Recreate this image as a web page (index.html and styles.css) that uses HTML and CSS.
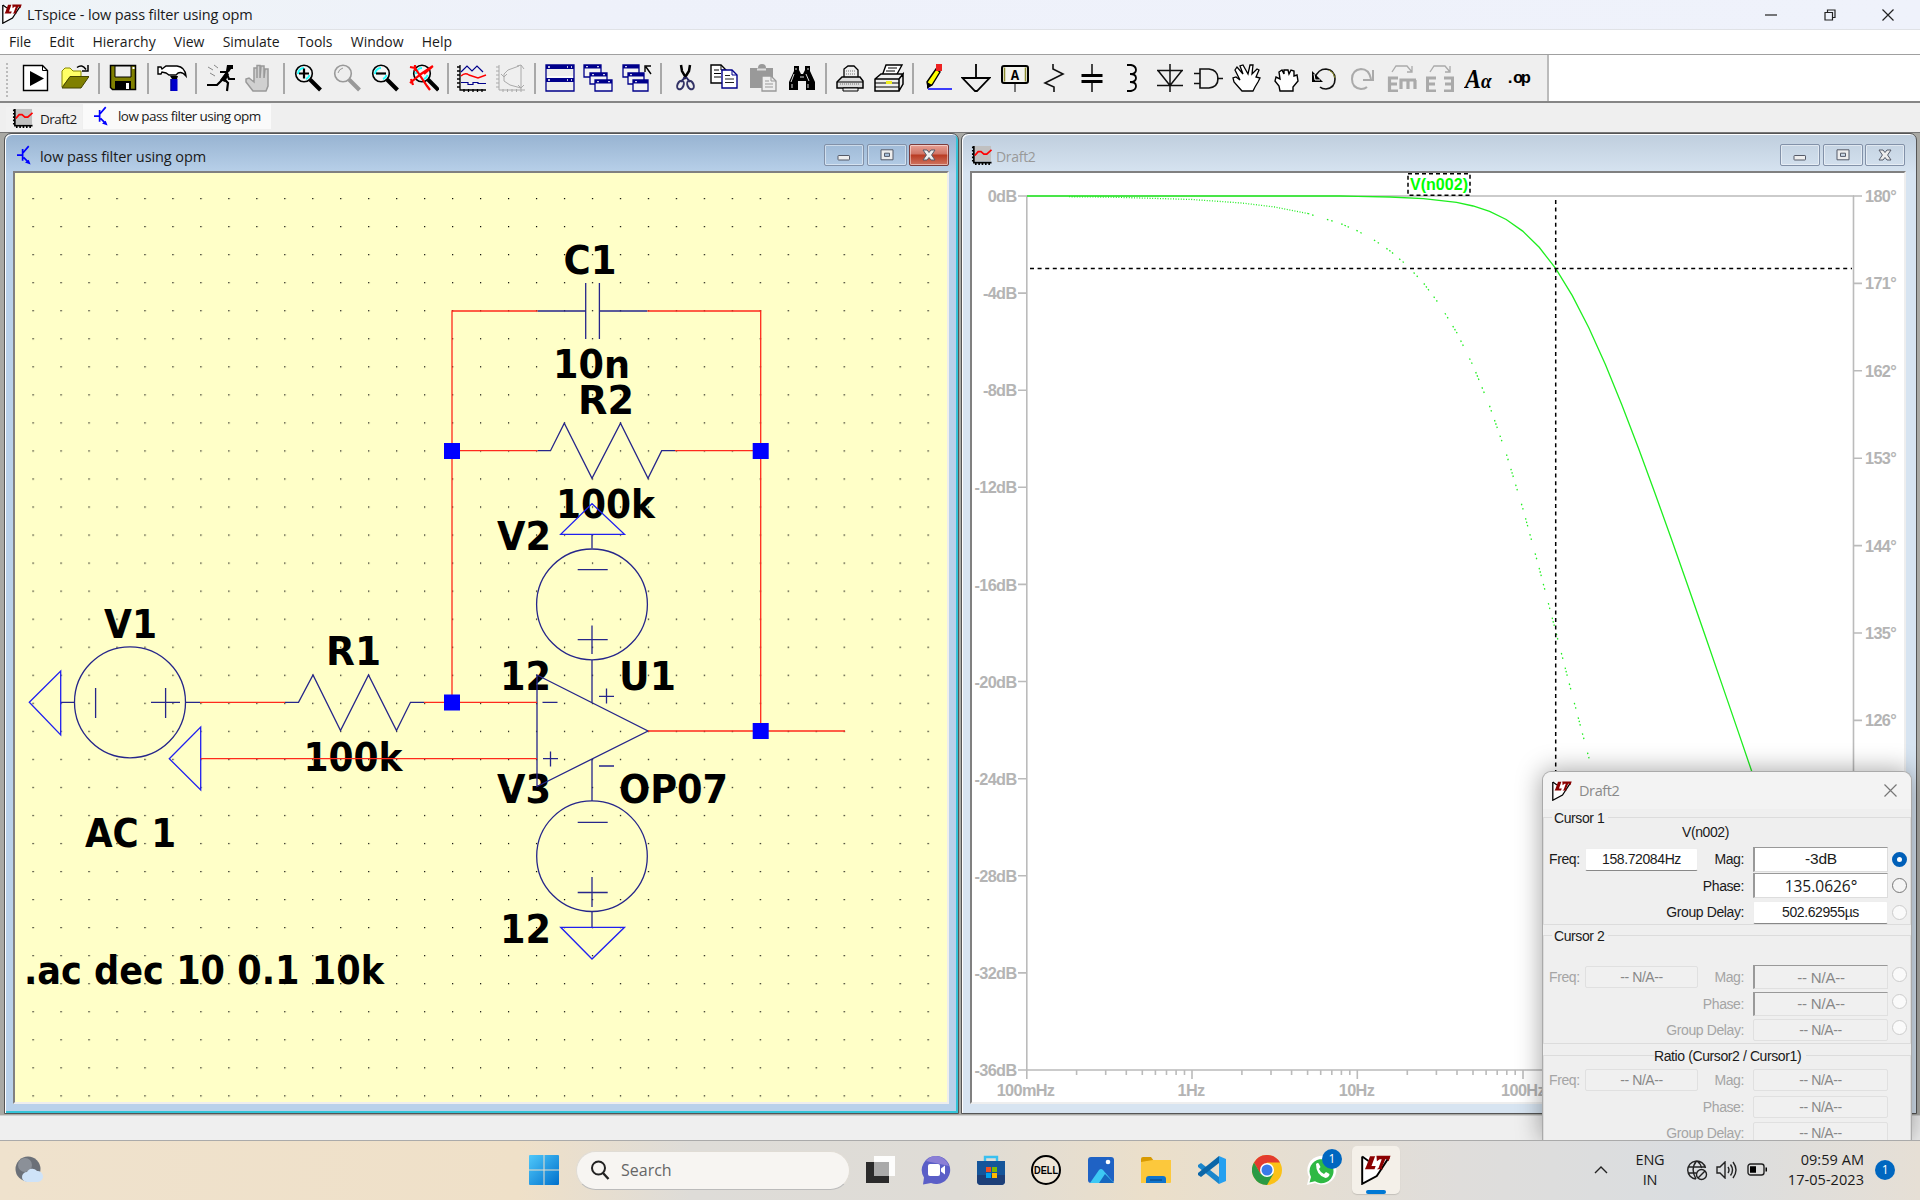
FILE: index.html
```html
<!DOCTYPE html>
<html lang="en">
<head>
<meta charset="utf-8">
<title>LTspice - low pass filter using opm</title>
<link rel="stylesheet" href="styles.css">
</head>
<body>
<svg class="defs" width="0" height="0" aria-hidden="true">
  <symbol id="lt-logo" viewBox="0 0 20 20">
    <path d="M.8 1v18.2L10.500 14l2-3L18.600 1.600" fill="#fff" stroke="#000" stroke-width="1.3"/>
    <path d="M.8 1 5 4" stroke="#000" stroke-width="1.2"/>
    <path d="M6 .800h3.400L7 7.400h2.800L9 9.500H2.600L3.600 7.400zM10.300.500h9.400l-1.300 3.700-1.200-1.400h-1L13.800 8.600l1 .900h-4.300l1.200-.900 2.100-5.800h-1.300l-1.900 1.400z" fill="#8b0000"/>
  </symbol>
  <symbol id="wave" viewBox="0 0 22 22">
    <path d="M3 1h18v16H3z" fill="#c0c0c0"/>
    <path d="M3 1v17.500h18.500M1 2.500h2M1 6h2M1 9.500h2M1 13h2M1 16.500h2M5 18v3M8.500 18v3M12 18v3M15.500 18v3M19 18v3" fill="none" stroke="#000" stroke-width="1.7"/>
    <path d="M4 11 7.500 7h3l3 2.500h3l5-4.500" fill="none" stroke="#f00" stroke-width="1.8"/>
  </symbol>
  <symbol id="transistor" viewBox="0 0 16 22">
    <path d="M0 10.500h6M6 4v12.500M6.500 8l6-7M7 13l5 5" fill="none" stroke="#00f" stroke-width="1.800"/>
    <path d="m14.500 20.500-6-2 4-3z" fill="#00f"/>
  </symbol>
  <symbol id="lens" viewBox="0 0 28 28">
    <circle cx="10" cy="9.500" r="8.300" fill="#f4f4f4" stroke="#000" stroke-width="1.600"/>
    <path d="M4 10a6 6 0 0 1 6-6M15.500 11a6 6 0 0 1-3.500 4" fill="none" stroke="#2ff" stroke-width="2"/>
    <path d="m16 15.500 10.500 10.500" stroke="#000" stroke-width="4"/>
  </symbol>
  <symbol id="g-min" viewBox="0 0 14 12"><rect x="1" y="6.500" width="11.500" height="4.500" rx=".6" fill="#eee" stroke="#555a68"/></symbol>
  <symbol id="g-max" viewBox="0 0 14 12"><path d="M1 .800h12v10H1zM4.500 4.200h5v3.200h-5z" fill="#eee" fill-rule="evenodd" stroke="#555a68"/></symbol>
  <symbol id="g-close" viewBox="0 0 14 12"><path d="M1 1h4l2 2.500L9 1h4L9.600 6 13 11H9L7 8.500 5 11H1L4.400 6z" fill="#eee" stroke="#555a68"/></symbol>
</svg>

<header class="titlebar">
  <svg class="logo" width="20" height="20"><use href="#lt-logo"/></svg>
  <span class="title">LTspice - low pass filter using opm</span>
  <div class="caption">
    <svg width="12" height="12" viewBox="0 0 12 12"><path d="M0 6h12"/></svg>
    <svg width="12" height="12" viewBox="0 0 12 12"><path d="M1 3.500h7.500v7.500H1zM3.500 3V1H11v7.500H9"/></svg>
    <svg width="12" height="12" viewBox="0 0 12 12"><path d="m.500.500 11 11M11.500.500l-11 11"/></svg>
  </div>
</header>

<nav class="menu"><span>File</span><span>Edit</span><span>Hierarchy</span><span>View</span><span>Simulate</span><span>Tools</span><span>Window</span><span>Help</span></nav>

<div class="toolrow">
<div class="toolbar">
  <svg viewBox="0 0 28 28"><path d="M1.500 1.500h19l5 5v20h-24z" fill="#fff" stroke="#000" stroke-width="1.400"/><path d="M20.500 1.500v5h5" fill="none" stroke="#000"/><path d="M8 7l14 7.500L8 22z"/></svg>
  <svg viewBox="0 0 28 28"><path d="M1 23V7l3-3h5l3 3h8v6H9z" fill="#ff6" stroke="#880"/><path d="M1 24 9 12.500h19L20 24z" fill="#808000" stroke="#440"/><path d="M16 3.500q5-4 9 2M27 1v6h-6" fill="none" stroke="#000" stroke-width="1.500"/></svg>
  <i></i>
  <svg viewBox="0 0 28 28"><path d="M1.500 1.500h25v24h-23l-2-2z" fill="#808000" stroke="#000" stroke-width="1.500"/><path d="M6 2h16v11H6z" fill="#eee" stroke="#000"/><path d="M6 17h16v8.500H6z"/><path d="M17 19h3v6h-3zM23.500 3h2v2h-2z" fill="#fff"/></svg>
  <i></i>
  <svg class="wide" viewBox="0 0 30 28"><path d="M1 3h3l1 2 4-3h11q8 1 9 10-4-5-8-3l-2 2h-7L9 9 5 8l-1 2H1z" fill="#fff" stroke="#000" stroke-width="1.400"/><path d="M13 12h8l-1 3h-5z"/><path d="M13.500 15h7v12h-7z" fill="#00c"/><path d="M14 15v12" stroke="#008"/></svg>
  <i></i>
  <svg viewBox="0 0 28 28"><path d="M20 1h6v4h-2l-2 3-3-1z"/><path d="m21 7-6 9M13 8h6l3 7h6M16 14l5 5-1 8M15 16l-5 5H0" fill="none" stroke="#000" stroke-width="2.200"/><path d="m19 8-6 8 5 2 4-8z"/><path d="m1 3 5 3M7 1l4 3M3 9l5 3" stroke="#888"/></svg>
  <svg viewBox="0 0 28 28"><path d="M8 27 1 18v-3l3-1 5 4V4h3v10V1.500h3V14l1-12h3v12l1-9h3v17l-2 5z" fill="#d0d0d0" stroke="#999" stroke-width="1.500"/></svg>
  <i></i>
  <svg viewBox="0 0 28 28"><use href="#lens"/><path d="M5 9.500h10M10 4.500v10" stroke="#000" stroke-width="2.200"/></svg>
  <svg viewBox="0 0 28 28"><circle cx="10" cy="9.500" r="8.300" fill="#eee" stroke="#999" stroke-width="1.600"/><path d="M5 9q1-4 5-5" fill="none" stroke="#999"/><path d="m16 15.500 10.500 10.500" stroke="#999" stroke-width="4"/></svg>
  <svg viewBox="0 0 28 28"><use href="#lens"/><path d="M5 9.500h10" stroke="#000" stroke-width="2.200"/></svg>
  <svg class="wide" viewBox="0 0 30 28"><use href="#lens" x="3" width="28" height="28"/><path d="m1 3 5 1 12 18 3 4M24 2 12 10 1 19M6 1v6M2 15l2 6M15 10l8-7" fill="none" stroke="#f00" stroke-width="2.200"/></svg>
  <i></i>
  <svg class="wide" viewBox="0 0 30 28"><path d="M3 1v25h26M0 3h3M0 7h3M0 11h3M0 15h3M0 19h3M0 23h3M7 25v3M11.500 25v3M16 25v3M20.500 25v3M25 25v3" fill="none" stroke="#000" stroke-width="1.300"/><path d="m4 8 6-6 5 5 5-5 6 6M4 18.500h7v2h5v-2h5v1h8" fill="none" stroke="#00008b" stroke-width="1.200"/><path d="M4 12q4-4 8-1 6 2 9 3l8-3" fill="none" stroke="#f00" stroke-width="1.400"/></svg>
  <svg class="wide" viewBox="0 0 30 28"><path d="M3 1v25h26M0 3h3M0 7h3M0 11h3M0 15h3M0 19h3M0 23h3M7 25v3M11.500 25v3M16 25v3M20.500 25v3M25 25v3M23 2 12 6l-4 4v7l6 4 11 3M25 1v24M8 13l-3-3M8 13l3-3M25 1l-4 1M25 1l3 4M25 24l-3-3M25 24l3-3" fill="none" stroke="#aaa"/></svg>
  <i></i>
  <svg class="wide" viewBox="0 0 30 28"><path d="M1 1h28v26H1z" fill="#eee" stroke="#00008b" stroke-width="1.300"/><path d="M1 1h28v4H1zM1 14h28v4H1z" fill="#00008b"/><path d="M3 3h2M22 3h1M26 3h1M3 16h2M22 16h1M26 16h1M2 13h26" stroke="#fff" stroke-width="1.500"/></svg>
  <svg class="wide" viewBox="0 0 30 28"><g fill="#f4f4f4" stroke="#00008b" stroke-width="1.300"><path d="M1 1h17v12H1z"/><path d="M7 9h17v11H7z"/><path d="M12 16h17v11H12z"/></g><path d="M1 1h17v3.500H1zM7 9h17v3.500H7zM12 16h17v3.500H12z" fill="#00008b"/><path d="M3 2.700h2M14 2.700h2M9 10.700h2M20 10.700h2M14 17.700h2M25 17.700h2" stroke="#fff"/></svg>
  <svg class="wide" viewBox="0 0 30 28"><g fill="#f4f4f4" stroke="#00008b" stroke-width="1.300"><path d="M1 1h16v12H1z"/><path d="M6 9h16v11H6z"/><path d="M11 16h15v11H11z"/></g><path d="M1 1h16v3.500H1zM6 9h16v3.500H6zM11 16h15v3.500H11z" fill="#00008b"/><path d="M3 2.700h2M8 10.700h2M13 17.700h2" stroke="#fff"/><path d="M29 10 24 3M29 2h-6v6" fill="none" stroke="#000" stroke-width="1.400"/></svg>
  <i></i>
  <svg viewBox="0 0 28 28"><path d="m9 1 1 6 4 7M18 1l-1 6-5 8" fill="none" stroke="#000" stroke-width="2.500"/><path d="m13 13-4 5M14 13l4 5" stroke="#226" stroke-width="2"/><ellipse cx="8.500" cy="21" rx="3" ry="4.500" transform="rotate(25 8.500 21)" fill="none" stroke="#336" stroke-width="2"/><ellipse cx="18.500" cy="21" rx="3" ry="4.500" transform="rotate(-25 18.500 21)" fill="none" stroke="#336" stroke-width="2"/></svg>
  <svg viewBox="0 0 28 28"><path d="M1 1h10l5 5v13H1z" fill="#fff" stroke="#000" stroke-width="1.400"/><path d="M11 1v5h5M4 6h5M4 9.500h7M4 13h7" fill="none" stroke="#000"/><path d="M12 6h10l5 5v13H12z" fill="#fff" stroke="#00008b" stroke-width="1.400"/><path d="M22 6v5h5" fill="none" stroke="#00008b"/><path d="M15 11.500h5M15 15h9M15 18.500h9" stroke="#222"/></svg>
  <svg viewBox="0 0 28 28"><path d="M1 4h8q0-4 4-4t4 4h7v20H1z" fill="#999"/><path d="M8 5.500h9" stroke="#ddd" stroke-width="2"/><path d="M13 12h9l5 5v10H13z" fill="#eee" stroke="#999" stroke-width="1.300"/><path d="M22 12v5h5M16 17h4M16 20h8M16 23h8" fill="none" stroke="#999"/></svg>
  <svg viewBox="0 0 28 28"><path d="M6 2h5v4l2 4h2l2-4V2h5v5l5 11v8h-9v-9h-8v9H1v-8L6 7z"/><path d="M8 4v2M20 4v2M6 10l-3 8M18 10l3 7M4 20v4M20 20v4M12 13h4" fill="none" stroke="#ddd"/></svg>
  <i></i>
  <svg viewBox="0 0 28 28"><path d="M8 14V5l4-3h6l4 4v8" fill="#eee" stroke="#000" stroke-width="1.300"/><path d="m1 18 5-5h18l3 4v7H1z" fill="#ddd" stroke="#000" stroke-width="1.500"/><path d="M1 18h26M7 24h15v3H7z" fill="#eee" stroke="#000"/><path d="M10 7h10M10 10h10M4 20h20" stroke="#777" stroke-dasharray="1 1"/></svg>
  <svg class="wide" viewBox="0 0 30 28"><path d="m8 12 4-11h16l-6 11" fill="#fff" stroke="#000" stroke-width="1.400"/><path d="m1 15 6-5h22l-4 5v12H1zM25 15l4-5v10l-4 7M1 15h24" fill="#eee" stroke="#000" stroke-width="1.500"/><path d="M14 4h9M12 7h9M1 19h24M1 23h24" stroke="#000"/><path d="M12 17h6v3h-6z" fill="#ee2"/></svg>
  <i></i>
  <svg viewBox="0 0 28 28"><path d="M12 5 3 18l1 5 4-2 8-13z" fill="#ff0" stroke="#000" stroke-width="1.400"/><path d="M13 1h4v5h-4z" fill="#e22" stroke="#e22" stroke-width="2"/><path d="m3 18 5 3-5 4z"/><path d="M4 25h24" stroke="#00f" stroke-width="1.500"/></svg>
  <svg class="wide" viewBox="0 0 30 28"><path d="M15 0v14M1.500 14h27L16 27h-2z" fill="none" stroke="#000" stroke-width="1.800"/></svg>
  <svg viewBox="0 0 28 28"><rect x="1" y="2" width="26" height="17" rx="2" fill="#f4f4ee" stroke="#000" stroke-width="2"/><path d="M3.500 3.500v14M24.500 3.500v14" stroke="#8a8a30" stroke-width="1.500"/><path d="M14 19v9" stroke="#000"/><text x="14" y="16" text-anchor="middle" class="ic-a">A</text></svg>
  <svg viewBox="0 0 28 28"><path d="M13 0v5l10 5-18 9 9 4v5" fill="none" stroke="#111" stroke-width="1.600"/></svg>
  <svg viewBox="0 0 28 28"><path d="M14 0v10M14 17v11" stroke="#000" stroke-width="1.400"/><path d="M3.500 11.500h21M3.500 17.500h21" stroke="#000" stroke-width="3"/></svg>
  <svg viewBox="0 0 28 28"><path d="M10 1h4q5 1 5 5t-6 4q6 0 6 4t-6 4q6 0 6 4t-5 5h-4" fill="none" stroke="#000" stroke-width="1.800"/></svg>
  <svg viewBox="0 0 28 28"><path d="M14 0v28M1 6.500h26M1 21.500h26M2 6.500l12 15 12-15" fill="none" stroke="#111" stroke-width="1.500"/></svg>
  <svg class="wide" viewBox="0 0 30 28"><path d="M7 5h9q9 1 9 9.500T16 24H7zM1 9.500h6M1 19.500h6M24 14.500h6" fill="none" stroke="#111" stroke-width="1.600"/></svg>
  <svg class="wide" viewBox="0 0 30 28"><path d="m10 27-8-9-1-4 3-1 4 3L3 6l2-3 6 7L8 2l3-1 5 9 2-9h3l-1 9 5-5 2 1-3 7 4 1-2 4-3 5-2 4z" fill="#fff" stroke="#000" stroke-width="1.300"/></svg>
  <svg viewBox="0 0 28 28"><path d="m8 27-1-5-4-5 1-4 4 2-1-7 3-2 2 4V6h4l1 4 2-4 3 1v5l3-1 1 6-5 6v4z" fill="#fff" stroke="#000" stroke-width="1.400"/></svg>
  <svg viewBox="0 0 28 28"><path d="M5 14q3-9 11-9 9 1 9 10t-9 10q-4 0-6-2" fill="none" stroke="#111" stroke-width="1.600"/><path d="M19 6q5 2 6 8" fill="none" stroke="#882"/><path d="M2 7v11h11z"/><path d="m4 10 1 6h5" stroke="#fff" fill="none"/></svg>
  <svg viewBox="0 0 28 28"><path d="M22 15Q20 5 12 5q-9 1-9 10t9 10q4 0 6-2M24 6v10H14" fill="none" stroke="#aaa" stroke-width="2"/></svg>
  <svg class="wide" viewBox="0 0 30 28"><path d="M5 8 9 2h11l5 6M25 2v6h-5" fill="none" stroke="#aaa" stroke-width="1.300"/><path d="M11 14H2.500v13H11M2.500 20H10M29 16H14v9M21 16v9M28 16v9" fill="none" stroke="#aaa" stroke-width="3.200"/></svg>
  <svg class="wide" viewBox="0 0 30 28"><path d="M5 8 9 2h11l5 6M25 2v6h-5" fill="none" stroke="#aaa" stroke-width="1.300"/><path d="M11 14H2.500v13H11M2.500 20H10M19 14h8.500v13H19M27.500 20H20" fill="none" stroke="#aaa" stroke-width="3"/></svg>
  <svg class="wide" viewBox="0 0 30 28"><text x="1" y="24" class="ic-aa" textLength="16" lengthAdjust="spacingAndGlyphs">A</text><text x="17" y="24" class="ic-al" textLength="10.500" lengthAdjust="spacingAndGlyphs">α</text></svg>
  <svg class="wide" viewBox="0 0 30 28"><text x="2" y="19" class="ic-op" textLength="26">.op</text></svg>
</div>
</div>

<div class="tabs">
  <div class="tab"><svg width="21" height="21"><use href="#wave"/></svg><span>Draft2</span></div>
  <div class="tab active"><svg width="15" height="21"><use href="#transistor"/></svg><span>low pass filter using opm</span></div>
</div>

<main class="mdi">
  <section class="child focus">
    <div class="child-bar">
      <svg width="15" height="21"><use href="#transistor"/></svg><span>low pass filter using opm</span>
      <div class="btns"><b><svg width="14" height="12"><use href="#g-min"/></svg></b><b><svg width="14" height="12"><use href="#g-max"/></svg></b><b class="x"><svg width="14" height="12"><use href="#g-close"/></svg></b></div>
    </div>
    <div class="canvas sch">
      <svg class="drawing" viewBox="15 173 933 930" width="933" height="930">
        <pattern id="grid" x="32.500" y="198" width="27.970" height="28.040" patternUnits="userSpaceOnUse"><rect width="1.200" height="1.200" fill="#000"/></pattern>
        <rect x="15" y="173" width="933" height="930" fill="url(#grid)"/>
        <g class="lbl">
          <text x="104" y="638" textLength="53" lengthAdjust="spacingAndGlyphs">V1</text>
          <text x="326" y="665" textLength="55" lengthAdjust="spacingAndGlyphs">R1</text>
          <text x="303.500" y="770.500" textLength="99" lengthAdjust="spacingAndGlyphs">100k</text>
          <text x="85" y="846.500" textLength="91" lengthAdjust="spacingAndGlyphs">AC 1</text>
          <text x="24" y="984" textLength="360" lengthAdjust="spacingAndGlyphs">.ac dec 10 0.1 10k</text>
          <text x="563.500" y="273.700" textLength="53" lengthAdjust="spacingAndGlyphs">C1</text>
          <text x="553" y="377.500" textLength="77" lengthAdjust="spacingAndGlyphs">10n</text>
          <text x="578" y="414" textLength="56" lengthAdjust="spacingAndGlyphs">R2</text>
          <text x="556" y="517.500" textLength="99" lengthAdjust="spacingAndGlyphs">100k</text>
          <text x="497" y="550" textLength="54" lengthAdjust="spacingAndGlyphs">V2</text>
          <text x="500" y="690" textLength="51" lengthAdjust="spacingAndGlyphs">12</text>
          <text x="619" y="690" textLength="57" lengthAdjust="spacingAndGlyphs">U1</text>
          <text x="619" y="803" textLength="109" lengthAdjust="spacingAndGlyphs">OP07</text>
          <text x="497" y="803" textLength="54" lengthAdjust="spacingAndGlyphs">V3</text>
          <text x="500" y="943" textLength="51" lengthAdjust="spacingAndGlyphs">12</text>
        </g>
        <g class="part">
          <path d="M537.500 311h48M585.700 283v56M599.400 283v56M599.400 311h48"/>
          <path d="M537.500 450.700h13L564.300 423.300 592 478.300l28.500-55L648 478.300l13.700-27.600H675"/>
          <path d="M592 534.300v14M577.700 569.700h30M577.700 639.700h30M592 625.500V654M592 660v42.300"/>
          <circle cx="592" cy="604.400" r="55.400"/>
          <path d="M537 675 648 731 537 786.500zM542.500 702.300h15M543 758.700h15M550.500 751.500v15M599 696.300h15M606.500 688.500v15M599 766h15M592 758.700V801M577.700 822.300h30M577.700 892.500h30M592 877v30M592 911.500v15.800"/>
          <circle cx="592" cy="856.200" r="55.300"/>
          <circle cx="130" cy="702.300" r="55.500"/>
          <path d="M60.700 702.300H74M95.600 688v30M151 702.300h29M165.600 688v30M186 702.300h14M285 702.300h13.500L313 675l27.500 55.500L368.500 675l28 55.500 14-28.200H424"/>
        </g>
        <g class="gnd"><path d="M592 503.700 560.700 534.300h63.800zM560.700 927.300h63.800L592 959zM29.300 702.300 60.700 671v64zM169.300 758.700 200.700 727v63z"/></g>
        <g class="wire"><path d="M537.500 311H452v391.300M647.500 311h113.200v420M452 450.700h85.500M675 450.700h85.700M200 702.300h85M424 702.300h113M200.700 758.700H537M648 731h197"/></g>
        <path class="node" d="M444 443h16v16h-16zM752.700 443h16v16h-16zM444 694.500h16v16h-16zM752.700 723h16v16h-16z"/>
      </svg>
    </div>
  </section>

  <section class="child">
    <div class="child-bar">
      <svg width="21" height="21"><use href="#wave"/></svg><span>Draft2</span>
      <div class="btns"><b><svg width="14" height="12"><use href="#g-min"/></svg></b><b><svg width="14" height="12"><use href="#g-max"/></svg></b><b><svg width="14" height="12"><use href="#g-close"/></svg></b></div>
    </div>
    <div class="canvas">
      <svg class="drawing" viewBox="972 173 933 930" width="933" height="930">
        <g class="axis">
          <path d="M1026.800 196H1854M1026.800 196v883M1018 1070h836M1853.500 196v874"/>
          <path d="M1018 196h9M1018 293.100h9M1018 390.200h9M1018 487.300h9M1018 584.400h9M1018 681.500h9M1018 778.700h9M1018 875.800h9M1018 972.900h9"/>
          <path d="M1853 196h9M1853 283.400h9M1853 370.800h9M1853 458.200h9M1853 545.600h9M1853 633h9M1853 720.400h9"/>
          <path d="M1192 1070v9M1357.300 1070v9M1523 1070v9"/>
          <path id="decade" d="M1076.600 1070v5M1105.700 1070v5M1126.300 1070v5M1142.300 1070v5M1155.400 1070v5M1166.500 1070v5M1176.100 1070v5M1184.500 1070v5"/>
          <use href="#decade" x="165.300"/><use href="#decade" x="330.700"/>
        </g>
        <g class="tick end">
          <text x="1016.500" y="202">0dB</text><text x="1016.500" y="299">-4dB</text><text x="1016.500" y="396">-8dB</text><text x="1016.500" y="493">-12dB</text><text x="1016.500" y="590.500">-16dB</text><text x="1016.500" y="687.500">-20dB</text><text x="1016.500" y="784.500">-24dB</text><text x="1016.500" y="881.500">-28dB</text><text x="1016.500" y="978.500">-32dB</text><text x="1016.500" y="1075.500">-36dB</text>
        </g>
        <g class="tick">
          <text x="1865" y="201.500">180°</text><text x="1865" y="289">171°</text><text x="1865" y="376.500">162°</text><text x="1865" y="464">153°</text><text x="1865" y="551.500">144°</text><text x="1865" y="639">135°</text><text x="1865" y="725.500">126°</text>
        </g>
        <g class="tick mid">
          <text x="1025.500" y="1095.500">100mHz</text><text x="1191" y="1095.500">1Hz</text><text x="1356.500" y="1095.500">10Hz</text><text x="1523" y="1095.500">100Hz</text>
        </g>
        <path class="trace" d="M1027 196H1340L1357.400 196.400 1390 197 1423.500 198.600 1456.600 202.400 1473.100 206 1489.600 211.400 1506.200 219.500 1522.700 231.100 1539.200 247.300 1555.800 268.700 1572.300 295.600 1588.800 327.800 1605.400 364.600 1621.900 405 1638.400 448 1654.900 493 1671.500 539.200 1688 586.200 1704.500 633.800 1721.100 681.900 1737.600 729.900 1754.100 778.200"/>
        <path class="phase a" d="M1069 196.700 1109.400 197.100 1192.100 199.500 1241.700 203 1274.800 207 1307.800 213.500"/>
        <path class="phase b" d="M1307.800 213.500 1340.900 223.700 1357.400 230.900 1373.900 239.900 1390.500 251.200 1407 265.400 1423.500 283.100 1440 305.100 1456.600 332.300 1473.100 365.700 1489.600 406 1506.200 453.500 1522.700 508 1539.200 568.200 1555.800 631.700 1572.300 695.200 1590 762"/>
        <rect x="1408" y="173.700" width="62" height="21.500" class="pick"/>
        <path class="cursor" d="M1030 268.500h822M1555.700 200V1070"/>
        <text x="1410" y="190" class="sig" textLength="58" lengthAdjust="spacingAndGlyphs">V(n002)</text>
      </svg>
    </div>
  </section>
</main>

<div class="status"></div>

<aside class="dialog">
  <div class="dlg-title"><svg width="20" height="20"><use href="#lt-logo"/></svg><span>Draft2</span><svg class="dx" width="13" height="13" viewBox="0 0 13 13"><path d="m.500.500 12 12M12.500.500l-12 12"/></svg></div>
  <div class="group g1">
    <div class="legend">Cursor 1</div>
    <div class="sig-name">V(n002)</div>
    <div class="row"><label>Freq:</label><output>158.72084Hz</output><label>Mag:</label><output class="sunk">-3dB</output><em class="radio on"></em></div>
    <div class="row"><label class="span">Phase:</label><output class="sunk wide">135.0626°</output><em class="radio"></em></div>
    <div class="row"><label class="span">Group Delay:</label><output>502.62955µs</output><em class="radio off"></em></div>
  </div>
  <div class="group g2 dis">
    <div class="legend">Cursor 2</div>
    <div class="sig-name"></div>
    <div class="row"><label>Freq:</label><output>-- N/A--</output><label>Mag:</label><output class="sunk">-- N/A--</output><em class="radio off"></em></div>
    <div class="row"><label class="span">Phase:</label><output class="sunk">-- N/A--</output><em class="radio off"></em></div>
    <div class="row"><label class="span">Group Delay:</label><output>-- N/A--</output><em class="radio off"></em></div>
  </div>
  <div class="group g3 dis">
    <div class="legend">Ratio (Cursor2 / Cursor1)</div>
    <div class="row"><label>Freq:</label><output>-- N/A--</output><label>Mag:</label><output>-- N/A--</output></div>
    <div class="row"><label class="span">Phase:</label><output>-- N/A--</output></div>
    <div class="row"><label class="span">Group Delay:</label><output>-- N/A--</output></div>
  </div>
</aside>

<footer class="taskbar">
  <svg class="weather" width="28" height="28" viewBox="0 0 28 28"><circle cx="13" cy="13" r="12.500" fill="#6b7078"/><circle cx="10" cy="9" r="7" fill="#8b9098"/><path d="M12 26a5 5 0 0 1 0-10 6 6 0 0 1 10-1 5.500 5.500 0 0 1 1 11z" fill="#cfe3f8"/></svg>
  <div class="apps">
    <svg class="start" width="30" height="30" viewBox="0 0 30 30"><defs><linearGradient id="w" x2="1" y2="1"><stop stop-color="#4fc8fa"/><stop offset="1" stop-color="#0070cc"/></linearGradient></defs><path d="M0 1q0-1 1-1h13.500v14.500H0zM15.500 0H29q1 0 1 1v13.500H15.500zM0 15.500h14.500V30H1q-1 0-1-1zM15.500 15.500H30V29q0 1-1 1H15.500z" fill="url(#w)"/></svg>
    <div class="search"><svg width="20" height="20" viewBox="0 0 20 20"><circle cx="8.500" cy="8" r="6.500" fill="none" stroke="#222" stroke-width="2"/><path d="m13 13 5.500 6" stroke="#222" stroke-width="2.400"/></svg><span>Search</span></div>
    <svg class="app" viewBox="0 0 30 30"><path d="M0 7h23v21H0z" fill="#2b2b2b"/><path d="M8 1h21v20H8z" fill="#fff" opacity=".93"/><path d="M8 7h15v14H8z" fill="#aaa"/></svg>
    <svg class="app" viewBox="0 0 30 30"><path d="M15 1a14 14 0 1 1-5 27l-8 1.500 1-7A14 14 0 0 1 15 1z" fill="#5b5fc7"/><path d="M15 1a14 14 0 0 1 13 10L5 6q4-5 10-5z" fill="#8b7fd6"/><rect x="7" y="9" width="12" height="12" rx="2" fill="#fff"/><path d="m20 13.500 4-3v9l-4-3z" fill="#fff"/></svg>
    <svg class="app" viewBox="0 0 30 30"><path d="M9 7V2h12v5" fill="none" stroke="#39c0f0" stroke-width="2.400"/><path d="M1 6h28v20q0 4-4 4H5q-4 0-4-4z" fill="#15559a"/><path d="M1 20h28v6q0 4-4 4H5q-4 0-4-4z" fill="#1d3f78"/><path d="M10 12h5v5h-5z" fill="#f25022"/><path d="M16 12h5v5h-5z" fill="#7fba00"/><path d="M10 18h5v5h-5z" fill="#00a4ef"/><path d="M16 18h5v5h-5z" fill="#ffb900"/></svg>
    <svg class="app" viewBox="0 0 30 30"><circle cx="15" cy="15" r="14" fill="#eee6d8" stroke="#000" stroke-width="2"/><text x="15" y="18.500" text-anchor="middle" class="dell" textLength="24" lengthAdjust="spacingAndGlyphs">DELL</text></svg>
    <svg class="app" viewBox="0 0 30 30"><rect x="2" y="2" width="26" height="26" rx="3" fill="#1f62c4"/><path d="M4 28 13 15q2-2 4 0l11 13z" fill="#3cc8f4"/><path d="m13 28 6-9 9 9z" fill="#1668c0"/><circle cx="22" cy="7" r="2.300" fill="#fff"/></svg>
    <svg class="app" viewBox="0 0 30 30"><path d="M0 4q0-2 2-2h8l3 4h-5L0 8z" fill="#d99a00"/><path d="M0 7 12 5h18v22q0 1-1 1H0z" fill="#fcc83c"/><path d="M5 28v-4q0-3 3-3h14q3 0 3 3v4z" fill="#0f74cc"/><path d="M9 25h12" stroke="#0a4f93" stroke-width="1.500"/></svg>
    <svg class="app" viewBox="0 0 30 30"><path d="m1 10 3-2 18 14v7L1 12z" fill="#1a86cc"/><path d="M22 1v7L4 22l-3-2v-2z" fill="#0b66a8"/><path d="m22 1 7 3v22l-7 3z" fill="#26a0f0"/></svg>
    <svg class="app" viewBox="0 0 30 30"><circle cx="15" cy="15" r="15" fill="#fbc116"/><path d="M2 7.500A15 15 0 0 1 28 7.500H15L8.500 19z" fill="#e33b2e"/><path d="M2 7.500A15 15 0 0 0 15 30l6.500-11.300H8.500z" fill="#2a9a45"/><circle cx="15" cy="15" r="7" fill="#fff"/><circle cx="15" cy="15" r="5.500" fill="#3a7ae8"/></svg>
    <div class="badged"><svg class="app" viewBox="0 0 30 30"><path d="M0 30 2 22A14.500 14.500 0 1 1 8 28z" fill="#fff"/><path d="M2.500 27.500 4 22a12 12 0 1 1 4 4.300z" fill="#2fb944"/><path d="M9 9q2-2 3 0l1.500 3-1.500 2q1 3 5 5l2-2 3.500 2q0 3-4 4Q9 20 9 9z" fill="#fff"/></svg><span class="badge">1</span></div>
    <div class="tile"><svg width="30" height="30"><use href="#lt-logo"/></svg></div>
  </div>
  <div class="tray">
    <svg width="14" height="8" viewBox="0 0 14 8"><path d="m1 7 6-6 6 6" class="ln"/></svg>
    <div class="lang">ENG<br>IN</div>
    <svg class="net" width="21" height="21" viewBox="0 0 21 21"><path d="M9 19A9 9 0 1 1 18.500 8M1 7h17M1 13h8M9.500 1Q3 9 9 19M10 1q4 3 4.500 7" class="ln"/><circle cx="14.500" cy="14.500" r="5" class="ln"/><path d="m11 18 7-7" class="ln"/></svg>
    <svg class="vol" width="21" height="18" viewBox="0 0 21 18"><path d="M1 6h3l5-5v16l-5-5H1zM12 6q2 3 0 6M14.500 3.500q4 5.500 0 11M17 1q6 8 0 16" class="ln"/></svg>
    <svg width="21" height="14" viewBox="0 0 21 14"><rect x="1" y="1" width="16" height="11" rx="2.500" class="ln"/><path d="M3 3.200h6v6.600H3zM18.500 4.500h1.500v4h-1.500z"/></svg>
    <div class="clock">09:59 AM<br>17-05-2023</div>
    <span class="badge">1</span>
  </div>
</footer>
</body>
</html>
```
FILE: styles.css
```css
* { box-sizing: border-box; }
body {
  margin: 0; width: 1920px; height: 1200px; overflow: hidden; position: relative;
  display: flex; flex-direction: column; background: #efefef; color: #1a1a1a;
  font-family: "Open Sans", "Noto Sans", sans-serif; font-size: 14px;
}
.defs { position: absolute; }
svg { flex: none; display: block; }

/* window caption and menu */
.titlebar { height: 30px; background: linear-gradient(90deg, #eff4f7, #eef1fa 30%, #eff2fb); border-bottom: 1px solid #e0e2e6; display: flex; align-items: center; padding-left: 2px; }
.titlebar .logo { margin-top: -2px; }
.title { margin-left: 5px; font-size: 14.5px; letter-spacing: -.14px; white-space: nowrap; }
.caption { margin-left: auto; display: flex; gap: 46.500px; padding-right: 26px; }
.caption path, .dx path { fill: none; stroke: #222; stroke-width: 1.2; }

.menu { height: 25px; background: #fff; border-bottom: 1px solid #a0a0a0; display: flex; align-items: center; padding: 0 0 2px 9px; gap: 18.200px; font-size: 14px; }
.toolrow { height: 48px; background: #fff; border-bottom: 2px solid #868686; }
.toolbar { width: 1549px; height: 46px; background: #efefef; border-right: 2px solid #bbb; display: flex; align-items: center; padding-left: 16.600px; position: relative; }
.toolbar::before { content: ""; position: absolute; left: 6px; top: 8px; height: 34px; border-left: 2px dotted #bbb; }
.toolbar svg { width: 28px; height: 28px; margin: 0 5.340px; }
.toolbar svg.wide { width: 30px; margin: 0 4.340px; }
.toolbar i { width: 2px; height: 31px; margin: 0 4px; background: #a8a8a8; }
.ic-a { font: bold 14px "Liberation Mono", monospace; }
.ic-aa { font: italic bold 27px "Liberation Serif", serif; }
.ic-al { font: italic bold 20px "Liberation Serif", serif; }
.ic-op { font: bold 17px "Liberation Mono", monospace; }

.tabs { height: 29px; display: flex; padding: 1px 0 0 6px; gap: 1px; font-size: 13.500px; letter-spacing: -.55px; }
.tab { width: 76px; margin-top: 3px; height: 23px; background: #f1f1f1; display: flex; align-items: center; padding-left: 6px; gap: 7px; white-space: nowrap; }
.tab.active { width: 188px; margin-top: 0; height: 25px; background: #fafafa; padding-left: 11px; gap: 9px; }
.tab.active span { margin-top: -2px; }

/* child windows */
.mdi { height: 983px; display: flex; gap: 2px; padding: 0 2px 1px 4px; background: #a9a9a4; border-top: 1px solid #777; }
.child { width: 955px; height: 981px; border: 1px solid #555; border-radius: 7px 7px 0 0; box-shadow: inset 1px 1px #fff; padding: 0 9px 9px 8px; display: flex; flex-direction: column; background: linear-gradient(#bfcedd, #d7e4f1 40px); }
.child + .child { width: 956px; padding-right: 10px; }
.child.focus { background: linear-gradient(#97b3d1, #b9d1ea 40px); box-shadow: inset 1px 1px #fff, inset -2px -2px #35c4d8; }
.child-bar { height: 37px; display: flex; align-items: center; padding-left: 4px; font-size: 14.500px; letter-spacing: -.08px; }
.child-bar > svg { margin-top: 6px; }
.child-bar span { margin: 7px 0 0 8px; }
.child + .child .child-bar { padding-left: 1px; color: #999; font-size: 14px; letter-spacing: -.3px; }
.child + .child .child-bar span { margin-left: 4px; }
.btns { margin: 5px 0 0 auto; display: flex; gap: 2.500px; }
.child + .child .btns { margin-right: 1px; }
.btns b { width: 40px; height: 22px; border: 1px solid #8291a8; border-radius: 2px; box-shadow: inset 0 0 0 1px #ffffff77; display: flex; align-items: center; justify-content: center; }
.btns .x { background: linear-gradient(#e8a094, #d07465 45%, #b93a22 50%, #cf7460); border-color: #7c3c3c; }
.canvas { flex: 1; border: 2px solid #808080; border-right-color: #eee; border-bottom-color: #eee; background: #fff; overflow: hidden; }
.canvas.sch { background: #ffffc8; }

/* schematic */
.lbl text { font: bold 39px "DejaVu Sans Condensed", "DejaVu Sans", sans-serif; font-stretch: condensed; }
.part, .gnd, .wire { fill: none; stroke-width: 1.3; }
.part { stroke: #26268a; }
.gnd { stroke: #2020f0; }
.wire { stroke: #ff2a1c; }
.node { fill: #00f; }

/* Bode plot */
.axis { fill: none; stroke: #bbb; stroke-width: 1.6; }
.tick { font: bold 16.300px "Liberation Sans", Arial, sans-serif; fill: #b4b4b4; letter-spacing: -.65px; }
.end { text-anchor: end; }
.mid { text-anchor: middle; }
.trace, .phase { fill: none; stroke: #1fee1f; stroke-width: 1.300; }
.phase.a { stroke-dasharray: 1 1.600; }
.phase.b { stroke-dasharray: 1.500 3 1.500 14 1.500 3 1.500 9 1.500 2 1.500 2 1.500 8; }
.pick { fill: none; stroke: #000; stroke-width: 1.500; stroke-dasharray: 4 3; }
.cursor { fill: none; stroke: #000; stroke-width: 1.500; stroke-dasharray: 4 3.600; }
.sig { font: bold 17px "Liberation Sans", Arial, sans-serif; fill: #0f0; }

.status { height: 25px; background: #efefef; border-top: 1px solid #d0d0d0; }

/* cursor read-out */
.dialog { position: absolute; left: 1542px; top: 771px; width: 370px; height: 369px; clip-path: inset(-30px -20px 0 -50px); background: #efefef; border: 1px solid #aaa; border-bottom: 0; border-radius: 9px 9px 0 0; box-shadow: 0 0 26px #00000060; font: 14px "Liberation Sans", Arial, sans-serif; letter-spacing: -.4px; }
.dlg-title { height: 37px; display: flex; align-items: center; padding: 0 14px 0 9px; background: #f3f3f3; border-radius: 9px 9px 0 0; font: 14.500px "Open Sans", sans-serif; color: #8a8a8a; }
.dlg-title span { margin-left: 7px; }
.dlg-title .dx { margin-left: auto; }
.dx path { stroke: #777; }
.group { border: 1px solid #dcdcdc; margin-top: 8px; height: 108px; }
.legend { background: #efefef; height: 2px; margin: -1px 0 0 8px; line-height: 2px; }
.g1 .legend, .g2 .legend { width: 56px; padding: 0 2px; }
.g1 .sig-name, .g2 .sig-name { height: 27px; line-height: 27px; text-align: center; padding-right: 43px; }
.row { height: 26.500px; display: grid; grid-template-columns: 36px 113px 46px 9px 135px 1fr; align-items: center; padding-left: 5px; }
.row label { grid-column: 1; }
.row label + output { grid-column: 2; }
.row output + label { grid-column: 3; text-align: right; }
.row .span { grid-column: 1 / 4; text-align: right; }
.row label ~ output:last-of-type { grid-column: 5; }
.row output { height: 23px; background: #fff; border: 1px solid #eee; border-bottom: 1px solid #888; border-radius: 2px; display: flex; align-items: center; justify-content: center; }
.row output.sunk { height: 25px; border: 1px solid #ddd; border-top-color: #999; border-left: 2px solid #999; border-radius: 0; font-size: 15.500px; letter-spacing: -.2px; }
.row output.wide { font: 15.500px "Open Sans", sans-serif; letter-spacing: 0; }
.radio { width: 15px; height: 15px; border: 1px solid #777; border-radius: 50%; background: #f5f5f5; justify-self: end; margin-right: 3px; }
.radio.on { border: 5px solid #005fb8; background: #fff; }
.radio.off { border-color: #ccc; background: #fafafa; }
.g2 { margin-top: 10px; height: 109px; }
.dis .row { color: #a5a5a5; }
.dis .row output { background: #f0f0f0; border-color: #e0e0e0; color: #888; height: 22px; }
.dis .row output.sunk { border-top-color: #999; border-left-color: #999; height: 24px; font-size: 15px; }
.dis .radio { margin-top: -5px; }
.g3 { margin-top: 11px; border-bottom: 0; height: 95px; }
.g3 .legend { width: 152px; margin: -1px auto 10px 110px; white-space: nowrap; }

/* taskbar */
.taskbar { height: 60px; border-top: 1px solid #aaa; display: flex; align-items: center; padding-bottom: 1px; background: linear-gradient(90deg, #efe2cd, #efe0c8 27%, #dedcd8 36%, #dfdcd6 50%, #ebdfca 60%, #dfdddb 76%, #dadde0 88%, #e6dfd5); z-index: 2; position: relative; }
.weather { margin-left: 15px; }
.apps { display: flex; align-items: center; margin-left: 486px; }
.search { width: 274px; height: 39px; margin: 0 15.500px 0 17px; border-radius: 20px; background: #f7f5f2; border: 1px solid #e0dcd5; border-bottom-color: #bbb; display: flex; align-items: center; gap: 11px; padding-left: 13px; font-size: 16px; color: #666; }
.app { width: 30px; height: 30px; margin-right: 25.200px; }
.badged { position: relative; }
.badge { width: 20px; height: 20px; border-radius: 50%; background: #0067c0; color: #fff; font-size: 12px; line-height: 20px; text-align: center; }
.badged .badge { position: absolute; left: 15px; top: -6px; }
.dell { font: bold 10px "Liberation Sans", sans-serif; }
.tile { width: 48px; height: 48px; margin-left: -10px; border-radius: 5px; background: #f4f0e9; box-shadow: 0 1px 1px #0002; display: flex; align-items: center; justify-content: center; position: relative; }
.tile::after { content: ""; position: absolute; left: 14px; bottom: 0; width: 20px; height: 4px; border-radius: 2px; background: #0078d4; }
.tray { margin-left: auto; padding-right: 25px; display: flex; align-items: center; font-size: 14.500px; line-height: 20px; letter-spacing: -.2px; white-space: nowrap; }
.lang { width: 40px; margin: 0 17px 0 22px; text-align: center; }
.vol { margin: 0 10px 0 8px; }
.clock { width: 97px; text-align: right; margin: -1px 11px 0 -1px; letter-spacing: .05px; }
.ln { fill: none; stroke: #222; stroke-width: 1.400; }
```
